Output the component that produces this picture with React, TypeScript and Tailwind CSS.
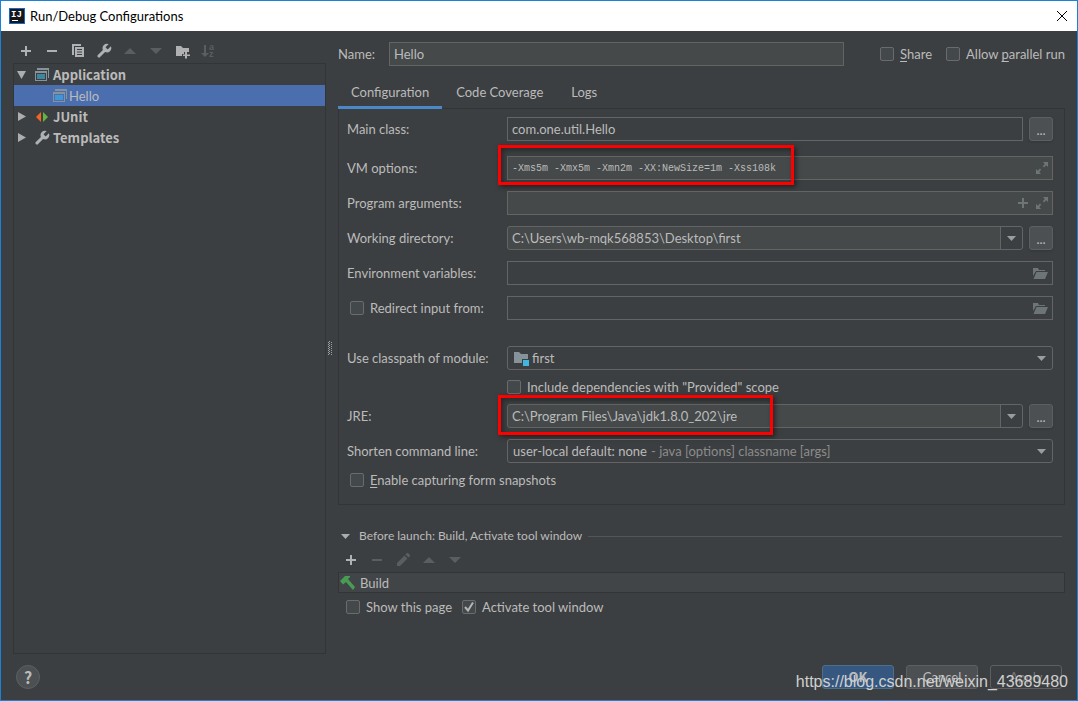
import React, { useState } from 'react';

type IconProps = { className?: string };

const Svg = ({ className = '', children }: IconProps & { children: React.ReactNode }) => (
  <svg viewBox="0 0 16 16" className={`h-4 w-4 shrink-0 ${className}`} fill="currentColor" aria-hidden="true">
    {children}
  </svg>
);

const PlusIcon = (p: IconProps) => <Svg {...p}><path d="M7 3h2v4h4v2H9v4H7V9H3V7h4z" /></Svg>;
const MinusIcon = (p: IconProps) => <Svg {...p}><path d="M3 7h10v2H3z" /></Svg>;
const UpIcon = (p: IconProps) => <Svg {...p}><path d="M2 11l6-6 6 6z" /></Svg>;
const DownIcon = (p: IconProps) => <Svg {...p}><path d="M2 5h12l-6 6z" /></Svg>;
const CopyIcon = (p: IconProps) => (
  <Svg {...p}>
    <path d="M2 1h9v2H4v9H2z" />
    <path fillRule="evenodd" d="M5 4h9v10H5zM7 6v1h5V6zM7 8.500v1h5v-1zM7 11v1h5v-1z" />
  </Svg>
);
const WrenchIcon = ({ className = '' }: IconProps) => (
  <svg viewBox="1 1 22 22" className={`h-4 w-4 shrink-0 ${className}`} fill="currentColor" aria-hidden="true">
    <path d="M14.700 6.300a1 1 0 0 0 0 1.400l1.600 1.600a1 1 0 0 0 1.400 0l3.770-3.770a6 6 0 0 1-7.940 7.940l-6.910 6.910a2.120 2.120 0 0 1-3-3l6.910-6.910a6 6 0 0 1 7.940-7.940l-3.760 3.760z" />
  </svg>
);
const FolderPlusIcon = (p: IconProps) => (
  <Svg {...p}>
    <path d="M2 3h5l2 2h6v4h-5v2H8v2H2z" />
    <path d="M11 9h2v2.500h3v1.500h-3v2.500h-2V13H9v-1.500h2z" />
  </Svg>
);
const SortIcon = (p: IconProps) => (
  <Svg {...p}>
    <path d="M4 2h2v8h3l-4 4-4-4h3z" />
    <text x="9" y="7" fontSize="9" fontWeight="bold" fontFamily="Liberation Sans">a</text>
    <text x="9" y="14" fontSize="9" fontWeight="bold" fontFamily="Liberation Sans">z</text>
  </Svg>
);
const PencilIcon = (p: IconProps) => (
  <Svg {...p}><path d="M2 11l7.500-7.500 3 3L5 14H2zM10.500 2.500L12 1h1l2 2v1l-1.500 1.500z" /></Svg>
);
const AppIcon = ({ fill }: { fill: string }) => (
  <Svg className="text-[#87939a]">
    <path d="M3 1h12v10h-1V3H3z" />
    <path fillRule="evenodd" d="M1 4h12v10H1zM2 6v7h10V6z" />
    <path d="M3 7h8v5H3z" fill={fill} />
  </Svg>
);
const JUnitIcon = () => (
  <Svg>
    <path d="M7 3v10L2 8z" fill="#f26522" />
    <path d="M9 3v10l5-5z" fill="#62b543" />
  </Svg>
);
const ModuleIcon = () => (
  <Svg className="text-[#87939a]">
    <path d="M1 2h5l2 2h7v5H9v4H1z" />
    <path d="M10 10h6v6h-6z" fill="#40b6e0" />
  </Svg>
);
const HammerIcon = () => (
  <Svg className="text-[#499c54]"><path d="M0 6l5-5h5v1L8 4l7 8-2 3-7-8-3 2.500z" /></Svg>
);
const OpenFolderIcon = () => (
  <Svg className="text-[#6e7577]">
    <path d="M1 3h5l1 2h6v1H4l-3 5z" />
    <path d="M4.500 7H16l-3 7H1.500z" />
  </Svg>
);
const ExpandIcon = () => (
  <Svg className="text-[#6e7577]">
    <path d="M9 2h5v5l-1.800-1.800-2.200 2.200-1.200-1.200L10.800 4zM2 14V9l1.800 1.800L6 8.600l1.200 1.200L5.200 12 7 14z" />
  </Svg>
);
const ArrowIcon = ({ className = 'text-[#9a9da0]' }: IconProps) => (
  <svg viewBox="0 0 9 5" className={`h-[5px] w-[9px] shrink-0 ${className}`} fill="currentColor" aria-hidden="true">
    <path d="M0 0h9L4.500 5z" />
  </svg>
);
const TreeArrow = ({ open }: { open?: boolean }) => (
  <svg viewBox="0 0 9 9" className="h-[9px] w-[9px] shrink-0 text-[#adadad]" fill="currentColor" aria-hidden="true">
    <path d={open ? 'M0 1h9L4.500 9z' : 'M1 0l8 4.500L1 9z'} />
  </svg>
);
const Logo = () => (
  <svg viewBox="0 0 16 16" className="h-4 w-4 shrink-0" aria-hidden="true">
    <path d="M0 0h16v16H0z" fill="#1668c4" />
    <path d="M1 1h14v14H1z" fill="#15171b" />
    <text x="2" y="9" fontSize="9" fontWeight="bold" fontFamily="Liberation Mono" fill="#fff">IJ</text>
    <path d="M3 12h6v1H3z" fill="#fff" />
  </svg>
);

const FIELD = 'flex h-6 min-w-0 flex-1 items-center border border-[#646464]';
const INPUT = 'h-full min-w-0 flex-1 bg-transparent px-1 outline-none';
const BOLD = "font-['Noto_Sans_CJK_SC',sans-serif] font-bold";

const ToolButton = ({ label, disabled, children }: { label: string; disabled?: boolean; children: React.ReactNode }) => (
  <button
    type="button"
    aria-label={label}
    disabled={disabled}
    className="h-4 w-4 text-[#afb1b3] disabled:text-[#5b5d5f]"
  >
    {children}
  </button>
);

interface CheckProps {
  defaultChecked?: boolean;
  className?: string;
  children: React.ReactNode;
}

const Check = ({ defaultChecked, className = '', children }: CheckProps) => (
  <label className={`flex h-5 items-center gap-1.5 whitespace-nowrap ${className}`}>
    <span className="grid h-3.5 w-3.5 shrink-0">
      <input
        type="checkbox"
        defaultChecked={defaultChecked}
        className="peer col-start-1 row-start-1 h-3.5 w-3.5 appearance-none rounded-[2px] border border-[#6b6b6b] bg-[#43494a]"
      />
      <svg
        viewBox="0 0 14 14"
        className="pointer-events-none invisible col-start-1 row-start-1 h-3.5 w-3.5 peer-checked:visible"
        fill="none"
        stroke="#b4b4b4"
        strokeWidth="2"
      >
        <path d="M3 7l3 3.500L11 2.500" />
      </svg>
    </span>
    <span>{children}</span>
  </label>
);

const Row = ({ label, id, className = 'mt-[11px]', children }: { label: string; id: string; className?: string; children: React.ReactNode }) => (
  <div className={`flex items-center ${className}`}>
    <label htmlFor={id} className="w-40 shrink-0 whitespace-nowrap">{label}</label>
    <div className="relative flex min-w-0 flex-1 gap-1.5">{children}</div>
  </div>
);

const BrowseButton = () => (
  <button type="button" aria-label="Browse" className="h-6 w-6 rounded-[3px] border border-[#5e6060] bg-[#4c5052] pt-0.5 leading-5 shadow-sm">
    ...
  </button>
);

const EditableCombo = ({ id, value }: { id: string; value: string }) => (
  <div className={`${FIELD} rounded-[3px] bg-[#45494a]`}>
    <input id={id} defaultValue={value} className={INPUT} />
    <button type="button" aria-label="Show list" className="flex h-full w-[22px] items-center justify-center rounded-r-[3px] border-l border-[#646464] bg-[#3c3f41]">
      <ArrowIcon />
    </button>
  </div>
);

// Red marker drawn over a field
const Marker = ({ className }: { className: string }) => (
  <div className={`pointer-events-none absolute -left-[9px] h-10 border-3 border-[#fe0000] shadow-[2px_2px_5px_rgba(0,0,0,0.5),inset_2px_2px_5px_rgba(0,0,0,0.4)] ${className}`} />
);

const TABS = ['Configuration', 'Code Coverage', 'Logs'];

export default function App() {
  const [tab, setTab] = useState('Configuration');

  return (
    <div className="flex min-h-screen flex-col border border-[#1883d7] bg-[#3c3f41] font-['Lato',sans-serif] text-[13px] leading-5 text-[#bbbbbb]">
      <header className="flex h-[30px] items-center bg-white pr-[7px] pl-2 text-black">
        <Logo />
        <h1 className="ml-[5px] flex-1">Run/Debug Configurations</h1>
        <button type="button" aria-label="Close" className="h-4 w-4">
          <svg viewBox="0 0 16 16" className="h-4 w-4" stroke="currentColor">
            <path d="M3 3l10 10M13 3L3 13" />
          </svg>
        </button>
      </header>

      <main className="flex flex-1 px-3 pt-[11px]">
        <aside className="flex w-[313px] shrink-0 flex-col">
          <div className="flex gap-2.5 pt-px pb-1 pl-[5px]">
            <ToolButton label="Add"><PlusIcon /></ToolButton>
            <ToolButton label="Remove"><MinusIcon /></ToolButton>
            <ToolButton label="Copy"><CopyIcon /></ToolButton>
            <ToolButton label="Edit templates"><WrenchIcon /></ToolButton>
            <ToolButton label="Move up" disabled><UpIcon /></ToolButton>
            <ToolButton label="Move down" disabled><DownIcon /></ToolButton>
            <ToolButton label="New folder"><FolderPlusIcon /></ToolButton>
            <ToolButton label="Sort" disabled><SortIcon /></ToolButton>
          </div>
          <ul className="flex-1 border border-[#323436]">
            <li className={`flex h-[21px] items-center pl-[3px] ${BOLD}`}>
              <TreeArrow open />
              <span className="ml-2 flex items-center gap-[3px]"><AppIcon fill="#3e86a0" />Application</span>
            </li>
            <li className="flex h-[21px] items-center gap-px bg-[#4b6eaf] pl-[38px]">
              <AppIcon fill="#4197d6" />Hello
            </li>
            <li className={`flex h-[21px] items-center pl-[3px] ${BOLD}`}>
              <TreeArrow />
              <span className="ml-2 flex items-center gap-[3px]"><JUnitIcon />JUnit</span>
            </li>
            <li className={`flex h-[21px] items-center pl-[3px] ${BOLD}`}>
              <TreeArrow />
              <span className="ml-2 flex items-center gap-[3px]"><WrenchIcon className="text-[#afb1b3]" />Templates</span>
            </li>
          </ul>
        </aside>

        <div className="flex w-3 shrink-0 items-center pl-0.5">
          <svg viewBox="0 0 4 14" className="h-3.5 w-1" stroke="#a0a0a0" strokeDasharray="1 1">
            <path d="M.5 1v13M1.500 0v14M3.500 1v13" />
          </svg>
        </div>

        <section className="min-w-0 flex-1">
          <div className="flex h-6 items-center">
            <label htmlFor="name" className="w-[51px] shrink-0">Name:</label>
            <div className={`${FIELD} bg-[#45494a]`}>
              <input id="name" defaultValue="Hello" className={INPUT} />
            </div>
            <Check className="ml-9"><u className="underline-offset-2">S</u>hare</Check>
            <Check className="ml-3.5">Allow <u className="underline-offset-2">p</u>arallel run</Check>
          </div>

          <div role="tablist" className="relative z-10 mt-3 -mb-px flex">
            {TABS.map((name) => (
              <button
                key={name}
                type="button"
                role="tab"
                aria-selected={tab === name}
                onClick={() => setTab(name)}
                className={`h-[31px] border-b-3 px-3.5 first:px-[13px] ${tab === name ? 'border-[#4a88c7]' : 'border-transparent'}`}
              >
                {name}
              </button>
            ))}
          </div>

          <div className="border border-[#323436] pt-2 pr-[11px] pb-3.5 pl-2">
            <Row id="main" label="Main class:" className="">
              <div className={FIELD}>
                <input id="main" defaultValue="com.one.util.Hello" className={INPUT} />
              </div>
              <BrowseButton />
            </Row>
            <Row id="vm" label="VM options:" className="mt-[15px]">
              <div className={`${FIELD} bg-[#45494a] pr-0.5`}>
                <input id="vm" defaultValue="-Xms5m -Xmx5m -Xmn2m -XX:NewSize=1m -Xss108k" className={`${INPUT} font-['Liberation_Mono',monospace] text-[10px]`} />
                <ExpandIcon />
              </div>
              <Marker className="-top-[11px] w-[296px]" />
            </Row>
            <Row id="args" label="Program arguments:">
              <div className={`${FIELD} gap-[3px] bg-[#45494a] pr-0.5`}>
                <input id="args" className={INPUT} />
                <PlusIcon className="text-[#6e7577]" />
                <ExpandIcon />
              </div>
            </Row>
            <Row id="dir" label="Working directory:">
              <EditableCombo id="dir" value="C:\Users\wb-mqk568853\Desktop\first" />
              <BrowseButton />
            </Row>
            <Row id="env" label="Environment variables:">
              <div className={`${FIELD} pr-1`}>
                <input id="env" className={INPUT} />
                <OpenFolderIcon />
              </div>
            </Row>
            <div className="mt-[11px] flex items-center">
              <Check className="w-40 shrink-0 pl-[3px]">Redirect input from:</Check>
              <div className={`${FIELD} pr-1`}>
                <input aria-label="Input file" className={INPUT} />
                <OpenFolderIcon />
              </div>
            </div>
            <Row id="module" label="Use classpath of module:" className="mt-[26px]">
              <div className={`${FIELD} gap-[3px] rounded-[3px] pr-1.5 pl-[5px]`}>
                <ModuleIcon />
                <select id="module" className="h-full flex-1 appearance-none bg-transparent outline-none">
                  <option>first</option>
                </select>
                <ArrowIcon />
              </div>
            </Row>
            <Check className="mt-[7px] pl-40">Include dependencies with "Provided" scope</Check>
            <Row id="jre" label="JRE:" className="mt-[7px]">
              <EditableCombo id="jre" value="C:\Program Files\Java\jdk1.8.0_202\jre" />
              <BrowseButton />
              <Marker className="-top-[9px] w-[275px]" />
            </Row>
            <Row id="shorten" label="Shorten command line:">
              <div className={`${FIELD} rounded-[3px] pr-1.5 pl-[5px]`}>
                <select id="shorten" className="h-full appearance-none bg-transparent outline-none">
                  <option>user-local default: none</option>
                </select>
                <span className="flex-1 pl-1 text-[#8c8c8c]">- java [options] classname [args]</span>
                <ArrowIcon />
              </div>
            </Row>
            <Check className="mt-[7px] pl-[3px]"><u className="underline-offset-2">E</u>nable capturing form snapshots</Check>
          </div>

          <div className="mt-[21px] flex items-center px-[3px] text-[12px]">
            <ArrowIcon className="text-[#adadad]" />
            <h2 className="ml-[9px]">Before launch: Build, Activate tool window</h2>
            <div className="ml-1.5 flex-1 border-t border-[#515658]" />
          </div>
          <div className="flex gap-2.5 pt-1.5 pb-1 pl-[5px]">
            <ToolButton label="Add task"><PlusIcon /></ToolButton>
            <ToolButton label="Remove task" disabled><MinusIcon /></ToolButton>
            <ToolButton label="Edit task" disabled><PencilIcon /></ToolButton>
            <ToolButton label="Move task up" disabled><UpIcon /></ToolButton>
            <ToolButton label="Move task down" disabled><DownIcon /></ToolButton>
          </div>
          <div className="flex h-[21px] items-center gap-1 border border-[#323436] bg-[#414547] pl-px">
            <HammerIcon />Build
          </div>
          <div className="mt-1 flex gap-2.5 pl-2">
            <Check>Show this page</Check>
            <Check defaultChecked>Activate tool window</Check>
          </div>
        </section>
      </main>

      <footer className="relative flex items-center gap-3 px-[15px] py-[11px]">
        <button type="button" aria-label="Help" className={`mr-auto h-6 w-6 rounded-full border border-[#5e6060] bg-[#4c5052] text-[16px] leading-5 ${BOLD}`}>?</button>
        <button type="button" className={`h-6 w-[72px] rounded-[3px] border border-[#4c708c] bg-[#365880] leading-5 ${BOLD}`}>OK</button>
        <button type="button" className="h-6 w-[72px] rounded-[3px] border border-[#5e6060] bg-[#4c5052] leading-5">Cancel</button>
        <button type="button" disabled className="h-6 w-[72px] rounded-[3px] border border-[#5e6060] leading-5 text-[#777777]">Apply</button>
        <span className="pointer-events-none absolute right-[9px] bottom-2 font-['Liberation_Sans',sans-serif] text-[16px] text-[#d0d0d0]">
          https://blog.csdn.net/weixin_43689480
        </span>
      </footer>
    </div>
  );
}
